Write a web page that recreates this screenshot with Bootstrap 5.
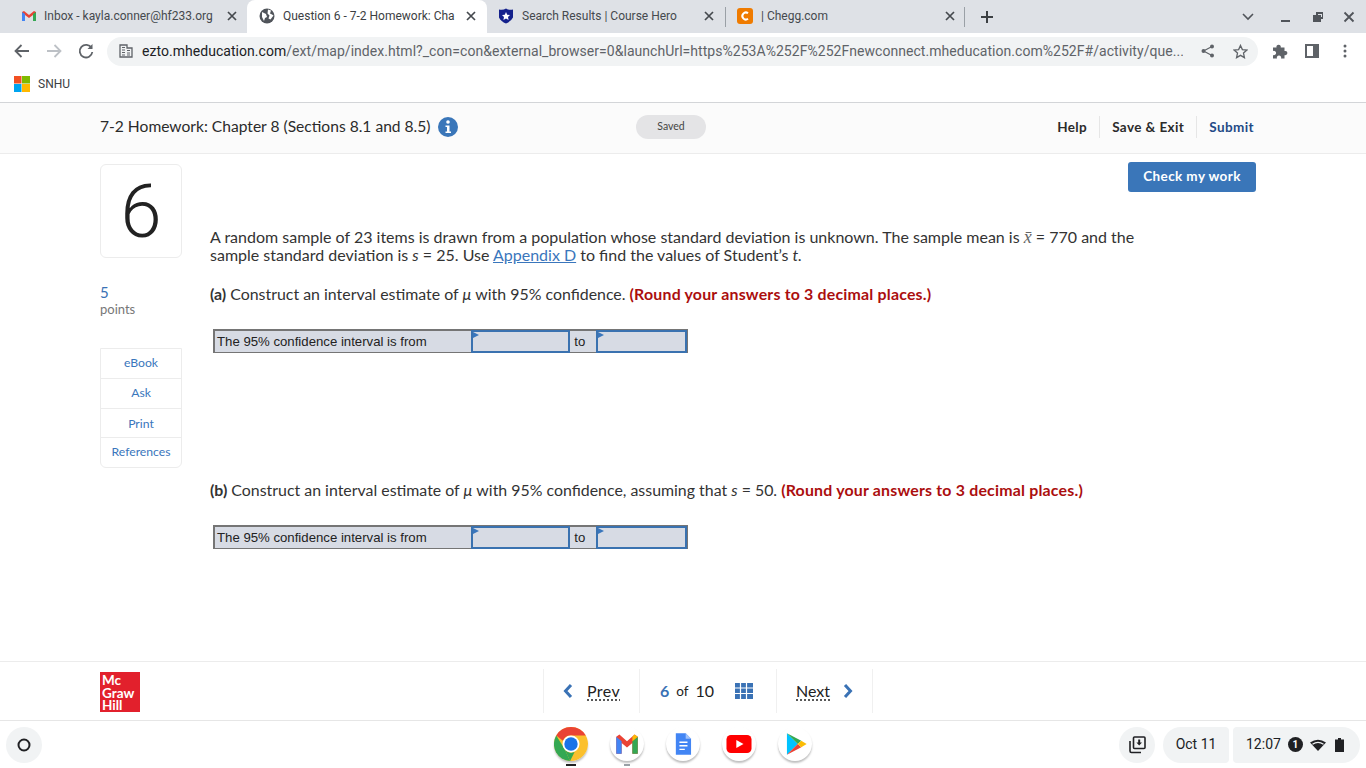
<!DOCTYPE html>
<html>
  <head>
    <title>Question 6 - 7-2 Homework</title>
    <link
      href="https://cdn.jsdelivr.net/npm/bootstrap@5.3.3/dist/css/bootstrap.min.css"
      rel="stylesheet"
    />
    <style>
      html, body { height: 768px; overflow: hidden; }
      body { font-family: Roboto, "Liberation Sans", sans-serif; color: #2b2b2b; background: #fff; }
      .mh-page { font-family: Lato, "Liberation Sans", sans-serif; }

      /* browser tabs */
      .tabstrip { height: 33px; background: #dee1e6; padding-left: 8px; }
      .tabitem { width: 238px; height: 33px; font-size: 12px; color: #45494e; padding: 0 11px 1px 11px; white-space: nowrap; }
      .tabitem.is-first { width: 239px; padding-left: 13px; padding-right: 10px; }
      .tabitem.is-active { background: #fff; border-radius: 8px 8px 0 0; color: #3c4043; width: 240px; padding-left: 12px; padding-right: 11px; }
      .tabitem.is-last { padding-right: 9px; }
      .tabtitle { overflow: hidden; flex: 1; margin-left: 8px; margin-right: 6px; }
      .is-first .tabtitle { margin-left: 7px; }
      .tabclose { flex: none; }
      .tabsep { width: 1px; height: 20px; background: #9aa0a6; }
      .tab-plus { margin-left: 15px; }
      .win-chevron { margin-right: 26px; }
      .win-min { margin-right: 20px; }
      .win-max { margin-right: 19px; }
      .win-close { margin-right: 11px; }

      /* browser toolbar */
      .toolbar { height: 36px; background: #fff; padding-left: 13px; gap: 14px; }
      .omnibox { width: 1151px; height: 29px; background: #f1f3f4; border-radius: 15px; margin-left: -2px; padding: 0 10px 0 12px; font-size: 14px; letter-spacing: .04px; color: #5f6368; white-space: nowrap; }
      .omnibox b { font-weight: 400; color: #202124; }
      .omni-site { margin-right: 9px; }
      .omni-share { margin: 0 18px; }
      .toolbar-ext { margin-right: 3px; }
      .toolbar-dots { margin-left: 10px; }
      .bookmarks { height: 34px; font-size: 12px; color: #3c4043; padding: 0 0 3px 14px; border-bottom: 1px solid #d3d5d8; }

      /* assignment header */
      .hw-head { height: 51px; background: #fbfbfb; border-bottom: 1px solid #ececec; padding: 0 112px 2px 100px; }
      .hw-title { font-size: 15.6px; width: 536px; }
      .hw-title svg { margin-left: 7px; }
      .saved-pill { width: 70px; height: 24px; border-radius: 12px; background: #e4e4e6; font-size: 10.5px; color: #444; }
      .hw-links a { font-size: 13.5px; font-weight: 700; color: #2b2b2b; text-decoration: none; padding: 1px 12px; border-right: 1px solid #e6e6e6; letter-spacing: .4px; }
      .hw-links a:last-child { border-right: 0; padding-right: 0; color: #1f4a86; }

      /* question area */
      .q-main { flex: 1; padding: 8px 110px 0 100px; }
      .q-side { width: 82px; margin-right: 28px; }
      .q-number { height: 94px; margin-top: 2px; font-family: Roboto, sans-serif; font-size: 74px; font-weight: 300; line-height: 94px; border: 1px solid #ececec; border-radius: 6px; text-align: center; color: #222; }
      .q-points { margin-top: 26px; font-size: 13px; color: #777; line-height: 17px; }
      .q-points span { display: block; font-size: 15px; color: #3a72b5; }
      .q-tools { margin-top: 30px; border: 1px solid #ececec; border-radius: 0 0 6px 6px; font-size: 12.2px; }
      .q-tools a { display: block; height: 30px; line-height: 28px; text-align: center; color: #3a76bc; text-decoration: none; border-bottom: 1px solid #ececec; }
      .q-tools a:nth-child(3) { height: 29px; line-height: 29px; }
      .q-tools a:last-child { border-bottom: 0; height: 29px; }
      .q-body { flex: 1; font-size: 16px; line-height: 18px; color: #333; }
      .check-btn { width: 128px; height: 30px; background: #3a76b9; color: #fff; font-size: 13.5px; font-weight: 700; border: 0; border-radius: 3px; padding: 0 0 2px; letter-spacing: .4px; }
      .q-text { width: 940px; margin: 36px 0 0 0; }
      .q-text a { color: #3a76bc; }
      .math-x { font-family: "Liberation Serif", serif; font-size: 18px; color: #666; }
      .red-note { color: #ab0e0e; font-weight: 700; letter-spacing: .2px; }
      .q-part { margin: 21px 0 0 0; font-size: 15.9px; }
      .q-part-b { margin-top: 128px; }

      /* answer table */
      .ans-table { display: flex; width: 475px; height: 24px; margin: 26px 0 0 3px; border: 1px solid #757575; background: #d7dbe4; font: 13.2px/21px "Liberation Sans", Arial, sans-serif; color: #222; border-width: 2px 1px 1px 2px; }
      .ans-label { width: 257px; padding-left: 2px; }
      .ans-to { width: 26px; padding-left: 4px; background: #d7dbe4; }
      .ans-input { position: relative; border: 2px solid #3a72b0; margin-top: -1px; height: 23px; }
      .ans-input::before { content: ""; position: absolute; left: 0; top: 0; border-left: 6px solid #3a76bc; border-top: 3px solid transparent; border-bottom: 3px solid transparent; }
      .ans-wide { width: 99px; }
      .ans-narrow { width: 91px; }

      /* footer nav */
      .q-foot { height: 59px; border-top: 1px solid #ececec; padding-left: 100px; }
      .mh-logo { width: 40px; height: 40px; margin-top: 2px; background: #e2202c; color: #fff; font-size: 13.5px; font-weight: 700; line-height: 12.5px; padding: 2px 0 0 2px; }
      .pager { margin-left: 403px; height: 44px; }
      .pager > div { height: 44px; border-left: 1px solid #f0f0f0; font-size: 16px; color: #222; }
      .pager > div:last-child { border-right: 1px solid #f0f0f0; }
      .pager u { text-decoration: underline dotted; text-underline-offset: 3px; }
      .pager-prev { width: 96px; padding-left: 19px; }
      .pager-prev svg { margin-right: 14px; }
      .pager-prev u { letter-spacing: .4px; }
      .pager-count { width: 137px; padding-left: 20px; }
      .pager-count svg { margin-left: 21px; }
      .pager-next { width: 97px; padding-left: 19px; }
      .pager-next svg { margin-left: 13px; }
      .pager-count b { color: #3a72b5; margin-right: 7px; }
      .pager-count small { font-size: 13.5px; margin-right: 7px; }

      /* chromeos shelf */
      .shelf { height: 48px; border-top: 1px solid #e6e6e6; position: relative; padding: 0 6px 0 6px; }
      .launcher { width: 36px; height: 36px; border-radius: 50%; background: #f1f3f4; }
      .shelf-apps { position: absolute; left: 554px; top: 6px; gap: 22px; }
      .appicon { width: 34px; height: 34px; position: relative; border-radius: 50%; background: #fff; box-shadow: 0 2px 2px rgba(0,0,0,.25); }
      .appicon svg { display: block; width: 100%; height: 100%; }
      .appdot { position: absolute; left: 12px; bottom: -5px; width: 10px; height: 2px; background: #222; }
      .appdot-idle { background: #9aa0a6; width: 6px; left: 14px; }
      .tray-pill { height: 36px; background: #f1f3f4; font-size: 14px; color: #202124; }
      .tray-round { width: 36px; border-radius: 18px; }
      .tray-date { width: 66px; border-radius: 18px 4px 4px 18px; }
      .tray-time { width: 127px; border-radius: 4px 18px 18px 4px; padding-left: 13px; }
      .tray-time svg, .tray-badge { margin-left: 7px; }
      .tray-time svg:last-child { margin-left: 9px; }
      .tray-badge { width: 15px; height: 15px; border-radius: 50%; background: #202124; color: #fff; font-size: 10px; font-weight: 700; }
    </style>
  </head>
  <body class="d-flex flex-column m-0">
    <svg class="d-none">
      <symbol id="ic-close" viewBox="0 0 10 10"><path d="M1 1l8 8M9 1L1 9" stroke="#45494e" stroke-width="1.700"/></symbol>
    </svg>

    <div class="tabstrip d-flex align-items-center">
      <div class="tabitem is-first d-flex align-items-center">
        <svg width="16" height="16" viewBox="0 0 16 16"><path d="M1 13V4l2 -1 5 4 5 -4 2 1v9h-3V7L8 10 4 7v6z" fill="#ea4335"/><path d="M1 13V4l3 2v7z" fill="#4285f4"/><path d="M15 13V4l-3 2v7z" fill="#34a853"/></svg>
        <span class="tabtitle">Inbox - kayla.conner@hf233.org</span>
        <svg class="tabclose" width="10" height="10"><use href="#ic-close"/></svg>
      </div>
      <div class="tabitem is-active d-flex align-items-center">
        <svg width="16" height="16" viewBox="0 0 16 16"><circle cx="8" cy="8" r="7.500" fill="#50545a"/><path d="M3 4l4 2 1 3-2 1-1 3-2-4zM9 1.500l3 1-1 3 2 1 1.500 1-3 4-2-1 1-3-2-2z" fill="#fff"/></svg>
        <span class="tabtitle">Question 6 - 7-2 Homework: Cha</span>
        <svg class="tabclose" width="10" height="10"><use href="#ic-close"/></svg>
      </div>
      <div class="tabitem d-flex align-items-center">
        <svg width="16" height="16" viewBox="0 0 16 16"><path d="M1 1.500q4 1 7-1 3 2 7 1v8q-2 4-7 6-5-2-7-6z" fill="#14218c"/><path d="M8 4l1.200 2.700 2.800.3-2 2 .6 3L8 10.500 5.400 12l.6-3-2-2 2.800-.3z" fill="#fff"/></svg>
        <span class="tabtitle">Search Results | Course Hero</span>
        <svg class="tabclose" width="10" height="10"><use href="#ic-close"/></svg>
      </div>
      <div class="tabsep"></div>
      <div class="tabitem is-last d-flex align-items-center">
        <svg width="16" height="16" viewBox="0 0 16 16"><rect width="16" height="16" rx="3" fill="#ef7b00"/><path d="M11 5.200A3.500 3.500 0 1 0 11 10.800" fill="none" stroke="#fff" stroke-width="2"/></svg>
        <span class="tabtitle">| Chegg.com</span>
        <svg class="tabclose" width="10" height="10"><use href="#ic-close"/></svg>
      </div>
      <div class="tabsep"></div>
      <svg class="tab-plus" width="14" height="14" viewBox="0 0 14 14"><path d="M7 1v12M1 7h12" stroke="#3c4043" stroke-width="2"/></svg>
      <div class="d-flex align-items-center ms-auto">
        <svg class="win-chevron" width="12" height="8" viewBox="0 0 12 8"><path d="M1 1l5 5 5-5" fill="none" stroke="#50545a" stroke-width="1.600"/></svg>
        <svg class="win-min" width="12" height="12" viewBox="0 0 12 12"><path d="M1 10h9" stroke="#50545a" stroke-width="2"/></svg>
        <svg class="win-max" width="12" height="12" viewBox="0 0 12 12"><path d="M4 1h7v7H9v3H1V4h3z M6 3v1h3v2h1V3z" fill="#50545a" fill-rule="evenodd"/></svg>
        <svg class="win-close" width="12" height="12" viewBox="0 0 12 12"><path d="M1.500 1.500l9 9M10.500 1.500l-9 9" stroke="#50545a" stroke-width="1.800"/></svg>
      </div>
    </div>

    <div class="toolbar d-flex align-items-center">
      <svg width="18" height="18" viewBox="0 0 18 18"><path d="M16 9H3M8.500 3L2.500 9l6 6" fill="none" stroke="#5f6368" stroke-width="1.800"/></svg>
      <svg width="18" height="18" viewBox="0 0 18 18"><path d="M2 9h13M9.500 3l6 6-6 6" fill="none" stroke="#bdc1c6" stroke-width="1.800"/></svg>
      <svg width="18" height="18" viewBox="0 0 18 18"><path d="M14.500 6A6.300 6.300 0 1 0 15.300 10" fill="none" stroke="#5f6368" stroke-width="1.800"/><path d="M15.500 2v5h-5z" fill="#5f6368"/></svg>
      <div class="omnibox d-flex align-items-center">
        <svg class="omni-site flex-shrink-0" width="14" height="14" viewBox="0 0 14 14"><path d="M1 1h7v3h5v9H1z" fill="none" stroke="#5f6368" stroke-width="1.300"/><path d="M3 3.500h3M3 6h3M3 8.500h3M3 11h3M8 6.500h3M8 9h3M8 11h3" stroke="#5f6368" stroke-width="1.200"/></svg>
        <span class="flex-grow-1 overflow-hidden"><b>ezto.mheducation.com</b>/ext/map/index.html?_con=con&amp;external_browser=0&amp;launchUrl=https%253A%252F%252Fnewconnect.mheducation.com%252F#/activity/que...</span>
        <svg class="omni-share flex-shrink-0" width="14" height="14" viewBox="0 0 14 14"><circle cx="11" cy="2.500" r="2" fill="#5f6368"/><circle cx="11" cy="11.500" r="2" fill="#5f6368"/><circle cx="2.500" cy="7" r="2" fill="#5f6368"/><path d="M11 2.500L2.500 7l8.500 4.500" fill="none" stroke="#5f6368" stroke-width="1.200"/></svg>
        <svg class="flex-shrink-0" width="15" height="15" viewBox="0 0 16 16"><path d="M8 1.500l2 4.500 4.800.5-3.600 3.200 1 4.800L8 12.100l-4.200 2.400 1-4.800L1.200 6.500 6 6z" fill="none" stroke="#5f6368" stroke-width="1.400"/></svg>
      </div>
      <svg class="toolbar-ext" width="16" height="16" viewBox="0 0 16 16"><path d="M1 4.500h3.500a2.200 2.200 0 1 1 4.200 0H12.500V8a2.200 2.200 0 1 1 0 4.200V15.500H9a2.200 2.200 0 1 0-4 0H1V12a2.200 2.200 0 1 0 0-4z" fill="#5f6368"/></svg>
      <svg width="14" height="14" viewBox="0 0 14 14"><path d="M1 1h12v12H1z" fill="none" stroke="#5f6368" stroke-width="2"/><path d="M8 1h5v12H8z" fill="#5f6368"/></svg>
      <svg class="toolbar-dots" width="4" height="14" viewBox="0 0 4 14"><circle cx="2" cy="2" r="1.500" fill="#5f6368"/><circle cx="2" cy="7" r="1.500" fill="#5f6368"/><circle cx="2" cy="12" r="1.500" fill="#5f6368"/></svg>
    </div>

    <div class="bookmarks d-flex align-items-center">
      <svg class="me-2" width="16" height="16" viewBox="0 0 16 16"><rect width="7.500" height="7.500" fill="#f25022"/><rect x="8" width="8" height="7.500" fill="#7fba00"/><rect y="8" width="7.500" height="8" fill="#00a4ef"/><rect x="8" y="8" width="8" height="8" fill="#ffb900"/></svg>
      SNHU
    </div>

    <div class="hw-head mh-page d-flex align-items-center">
      <div class="hw-title d-flex align-items-center">
        7-2 Homework: Chapter 8 (Sections 8.1 and 8.5)
        <svg width="20" height="20" viewBox="0 0 20 20"><circle cx="10" cy="10" r="10" fill="#3a76b9"/><circle cx="10" cy="5" r="1.800" fill="#fff"/><path d="M7.500 8.500h4v6h1.500v1.500H7.500v-1.500H9V10H7.500z" fill="#fff"/></svg>
      </div>
      <div class="saved-pill d-flex align-items-center justify-content-center">Saved</div>
      <div class="hw-links d-flex ms-auto"><a href="#">Help</a><a href="#">Save &amp; Exit</a><a href="#">Submit</a></div>
    </div>

    <div class="q-main mh-page d-flex">
      <div class="q-side">
        <div class="q-number">6</div>
        <div class="q-points"><span>5</span>points</div>
        <div class="q-tools"><a href="#">eBook</a><a href="#">Ask</a><a href="#">Print</a><a href="#">References</a></div>
      </div>
      <div class="q-body">
        <div class="d-flex justify-content-end"><button class="check-btn">Check my work</button></div>
        <p class="q-text">A random sample of 23 items is drawn from a population whose standard deviation is unknown. The sample mean is <i class="math-x">x̄</i> = 770 and the sample standard deviation is <i>s</i> = 25. Use <a href="#">Appendix D</a> to find the values of Student’s <i>t.</i></p>
        <p class="q-part mb-0"><b>(a)</b> Construct an interval estimate of <i>μ</i> with 95% confidence. <span class="red-note">(Round your answers to 3 decimal places.)</span></p>
        <div class="ans-table">
          <div class="ans-label">The 95% confidence interval is from</div>
          <div class="ans-input ans-wide"></div>
          <div class="ans-to">to</div>
          <div class="ans-input ans-narrow"></div>
        </div>
        <p class="q-part q-part-b mb-0"><b>(b)</b> Construct an interval estimate of <i>μ</i> with 95% confidence, assuming that <i>s</i> = 50. <span class="red-note">(Round your answers to 3 decimal places.)</span></p>
        <div class="ans-table">
          <div class="ans-label">The 95% confidence interval is from</div>
          <div class="ans-input ans-wide"></div>
          <div class="ans-to">to</div>
          <div class="ans-input ans-narrow"></div>
        </div>
      </div>
    </div>

    <div class="q-foot mh-page d-flex align-items-center">
      <div class="mh-logo">Mc<br />Graw<br />Hill</div>
      <div class="pager d-flex">
        <div class="pager-prev d-flex align-items-center">
          <svg width="10" height="16" viewBox="0 0 10 16"><path d="M8 2L2.500 8 8 14" fill="none" stroke="#3a72b5" stroke-width="3"/></svg><u>Prev</u>
        </div>
        <div class="pager-count d-flex align-items-center">
          <b>6</b><small>of</small>10
          <svg width="18" height="16" viewBox="0 0 18 16"><path d="M0 0h18v16H0z" fill="#3a72b5"/><path d="M5.500 0v16M11.500 0v16M0 5h18M0 10.500h18" stroke="#fff" stroke-width="1.200"/></svg>
        </div>
        <div class="pager-next d-flex align-items-center">
          <u>Next</u><svg width="10" height="16" viewBox="0 0 10 16"><path d="M2 2l5.500 6L2 14" fill="none" stroke="#3a72b5" stroke-width="3"/></svg>
        </div>
      </div>
    </div>

    <div class="shelf d-flex align-items-center">
      <div class="launcher d-flex align-items-center justify-content-center">
        <svg width="14" height="14" viewBox="0 0 14 14"><circle cx="7" cy="7" r="5.500" fill="none" stroke="#202124" stroke-width="2"/></svg>
      </div>
      <div class="shelf-apps d-flex">
        <div class="appicon">
          <svg viewBox="0 0 38 38"><circle cx="19" cy="19" r="19" fill="#fbc02d"/><path d="M19 0a19 19 0 0 1 16.500 9.500H19a9.500 9.500 0 0 0-9 6L2.500 9.500A19 19 0 0 1 19 0z" fill="#ea4335"/><path d="M2.500 9.500L12 25l6 13A19 19 0 0 1 2.500 9.500z" fill="#34a853"/><path d="M12 25a9 9 0 0 0 11 3L18 38z" fill="#34a853"/><circle cx="19" cy="19" r="9.500" fill="#fff"/><circle cx="19" cy="19" r="7.500" fill="#1a73e8"/></svg>
          <div class="appdot"></div>
        </div>
        <div class="appicon">
          <svg viewBox="0 0 38 38"><path d="M7 30V11l3.500-2.500L19 16l8.500-7.500L31 11v19h-6V18l-6 5-6-5v12z" fill="#ea4335"/><path d="M7 30V11l6 5v14z" fill="#4285f4"/><path d="M31 30V11l-6 5v14z" fill="#34a853"/><path d="M25 16l6-5-3.500-2.500L25 11z" fill="#fbbc04"/></svg>
          <div class="appdot appdot-idle"></div>
        </div>
        <div class="appicon">
          <svg viewBox="0 0 38 38"><path d="M11 7h11l6 6v18H11z" fill="#4285f4"/><path d="M22 7l6 6h-6z" fill="#a1c2fa"/><path d="M15 17h9M15 21h9M15 25h6" stroke="#fff" stroke-width="1.600"/></svg>
        </div>
        <div class="appicon">
          <svg viewBox="0 0 38 38"><rect x="5" y="9" width="28" height="20" rx="5" fill="#f00"/><path d="M16 14.500l8 4.500-8 4.500z" fill="#fff"/></svg>
        </div>
        <div class="appicon">
          <svg viewBox="0 0 38 38"><path d="M10 7l12 12-12 12z" fill="#00c3ff"/><path d="M10 7l16 8.500-4 3.500z" fill="#34a853"/><path d="M10 31l16-8.500-4-3.500z" fill="#ea4335"/><path d="M26 15.500l6 3.500-6 3.500-4-3.500z" fill="#fbbc04"/></svg>
        </div>
      </div>
      <div class="d-flex align-items-center ms-auto gap-2">
        <div class="tray-pill tray-round d-flex align-items-center justify-content-center">
          <svg width="18" height="18" viewBox="0 0 18 18"><rect x="5.500" y="1" width="11.500" height="11.500" rx="1" fill="none" stroke="#202124" stroke-width="1.600"/><path d="M2 5v10a1.500 1.500 0 0 0 1.500 1.500H13" fill="none" stroke="#202124" stroke-width="1.600"/><path d="M10.200 3.500h2v3H14l-2.800 3-2.800-3h1.800z" fill="#202124"/></svg>
        </div>
        <div class="d-flex gap-1 align-items-center">
          <div class="tray-pill tray-date d-flex align-items-center justify-content-center">Oct 11</div>
          <div class="tray-pill tray-time d-flex align-items-center">
            <span>12:07</span>
            <span class="tray-badge d-flex align-items-center justify-content-center">1</span>
            <svg width="16" height="12" viewBox="0 0 16 12"><path d="M0 3.500Q8 -2 16 3.500L8 12z" fill="#202124"/><path d="M2.500 5.300Q8 1.500 13.500 5.300" fill="none" stroke="#f1f3f4" stroke-width="1.200"/></svg>
            <svg width="9" height="14" viewBox="0 0 9 14"><path d="M3 0h3v1.500h3V14H0V1.500h3z" fill="#202124"/></svg>
          </div>
        </div>
      </div>
    </div>

    <script src="https://cdn.jsdelivr.net/npm/bootstrap@5.3.3/dist/js/bootstrap.bundle.min.js"></script>
  </body>
</html>
